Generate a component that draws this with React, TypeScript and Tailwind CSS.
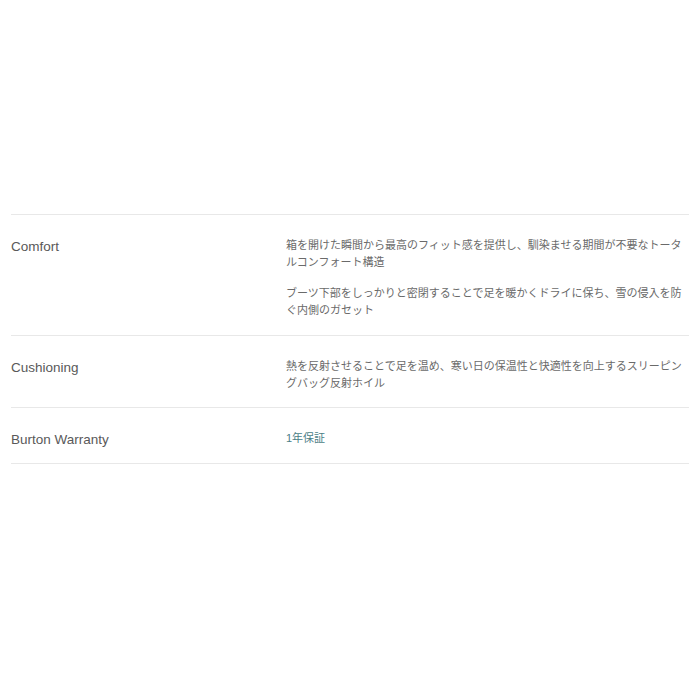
import React from 'react';

type Spec = {
  label: string;
  paragraphs: string[];
  link?: boolean;
};

const specs: Spec[] = [
  {
    label: 'Comfort',
    paragraphs: [
      '箱を開けた瞬間から最高のフィット感を提供し、馴染ませる期間が不要なトータルコンフォート構造',
      'ブーツ下部をしっかりと密閉することで足を暖かくドライに保ち、雪の侵入を防ぐ内側のガセット',
    ],
  },
  {
    label: 'Cushioning',
    paragraphs: ['熱を反射させることで足を温め、寒い日の保温性と快適性を向上するスリーピングバッグ反射ホイル'],
  },
  {
    label: 'Burton Warranty',
    paragraphs: ['1年保証'],
    link: true,
  },
];

export default function App() {
  return (
    <div className="w-[700px] h-[700px] bg-white pt-[214px] px-[11px] font-['Liberation_Sans','Noto_Sans_CJK_JP',sans-serif]">
      <div className="border-t border-[#e8e8e8]">
        {specs.map((spec) => (
          <div
            key={spec.label}
            className="flex items-start border-b border-[#e8e8e8] pt-[22px] pb-[15px] first:pb-[16px] last:pb-[16px]"
          >
            <div className="w-[275px] shrink-0 pt-[3px] text-[13.5px] leading-[14px] text-[#595959]">
              {spec.label}
            </div>
            <div className="flex-1 flex flex-col gap-[14px]">
              {spec.paragraphs.map((p) => (
                <p
                  key={p}
                  className={
                    spec.link
                      ? 'text-[11px] leading-[17px] text-[#4b7e86]'
                      : 'text-[11px] leading-[17px] text-[#6a6a6a]'
                  }
                >
                  {p}
                </p>
              ))}
            </div>
          </div>
        ))}
      </div>
    </div>
  );
}
